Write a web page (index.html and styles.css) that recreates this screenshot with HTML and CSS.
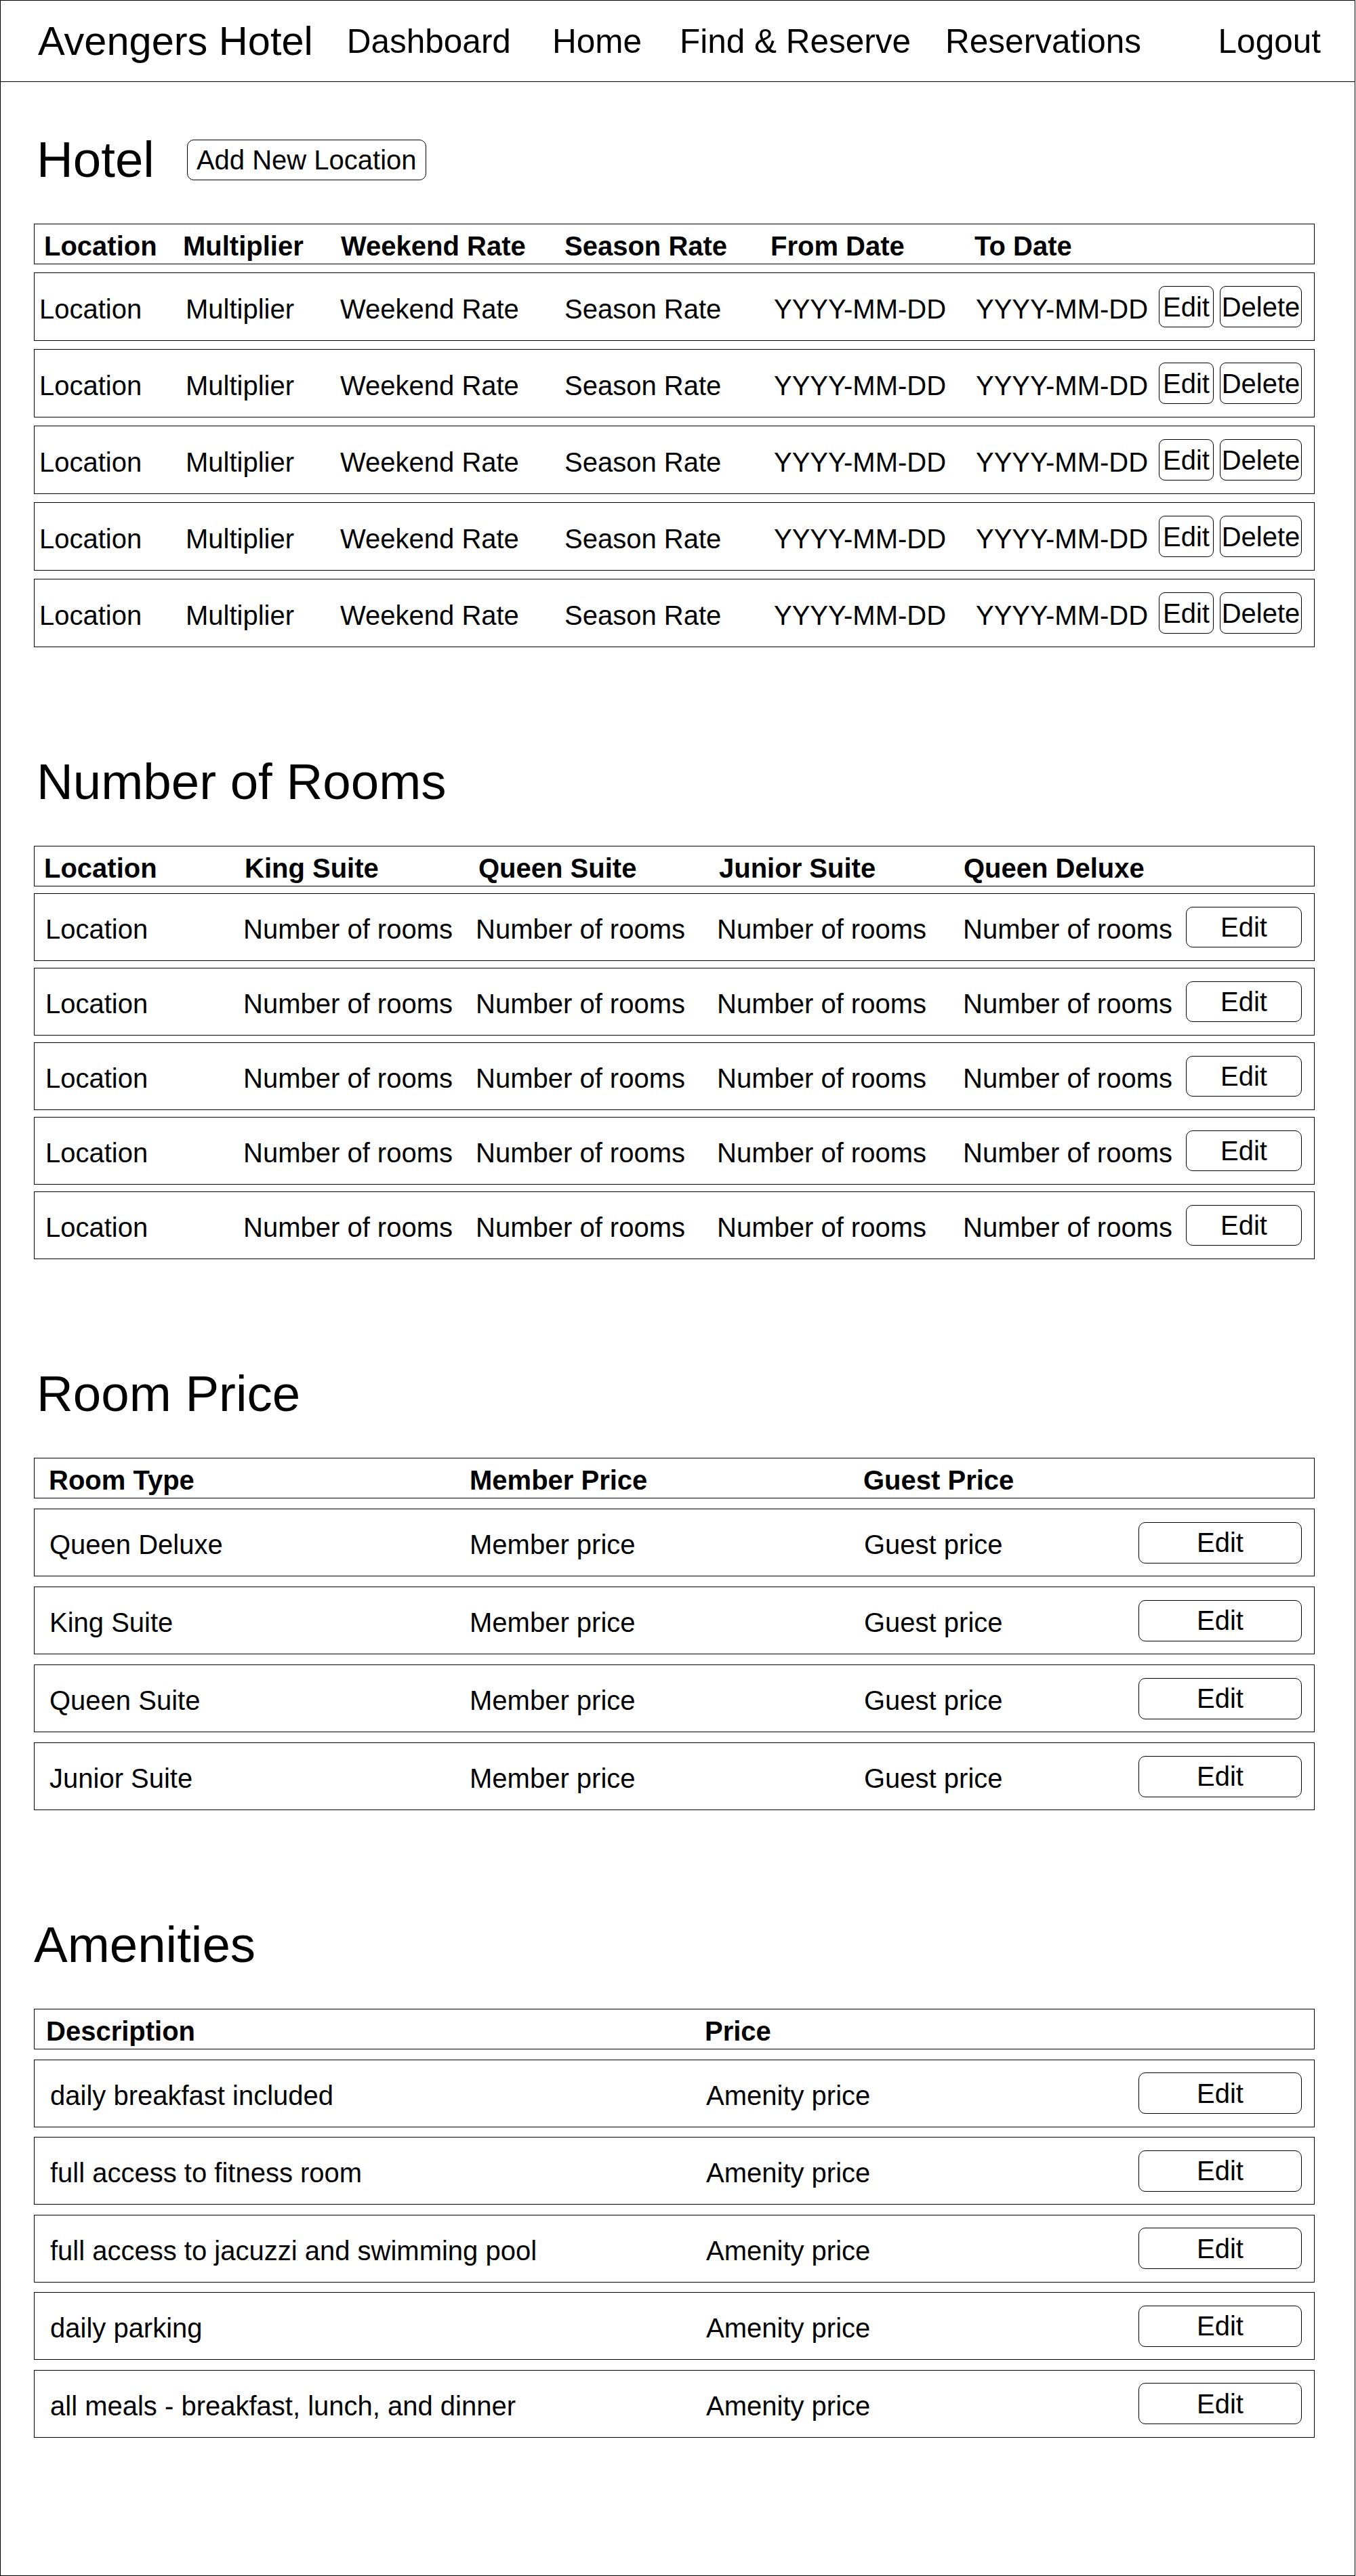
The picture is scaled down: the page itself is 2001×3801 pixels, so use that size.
FILE: index.html
```html
<!DOCTYPE html>
<html lang="en">
<head>
<meta charset="utf-8">
<title>Avengers Hotel - Admin</title>
<link rel="stylesheet" href="styles.css">
</head>
<body>
<div class="page">
  <header class="nav">
    <span class="brand">Avengers Hotel</span>
    <a class="nav-link nav-dashboard">Dashboard</a>
    <a class="nav-link nav-home">Home</a>
    <a class="nav-link nav-find">Find &amp; Reserve</a>
    <a class="nav-link nav-reservations">Reservations</a>
    <a class="nav-link nav-logout">Logout</a>
  </header>

  <main class="content">
    <section class="section">
      <div class="section-head">
        <h1 class="section-title">Hotel</h1>
        <button class="btn btn-add">Add New Location</button>
      </div>
      <div class="table table-hotel">
        <div class="row row-head">
          <span class="cell">Location</span>
          <span class="cell">Multiplier</span>
          <span class="cell">Weekend Rate</span>
          <span class="cell">Season Rate</span>
          <span class="cell">From Date</span>
          <span class="cell">To Date</span>
        </div>
        <div class="row row-data">
          <span class="cell">Location</span><span class="cell">Multiplier</span><span class="cell">Weekend Rate</span><span class="cell">Season Rate</span><span class="cell">YYYY-MM-DD</span><span class="cell">YYYY-MM-DD</span>
          <div class="actions"><button class="btn btn-sm-edit">Edit</button><button class="btn btn-sm-delete">Delete</button></div>
        </div>
        <div class="row row-data">
          <span class="cell">Location</span><span class="cell">Multiplier</span><span class="cell">Weekend Rate</span><span class="cell">Season Rate</span><span class="cell">YYYY-MM-DD</span><span class="cell">YYYY-MM-DD</span>
          <div class="actions"><button class="btn btn-sm-edit">Edit</button><button class="btn btn-sm-delete">Delete</button></div>
        </div>
        <div class="row row-data">
          <span class="cell">Location</span><span class="cell">Multiplier</span><span class="cell">Weekend Rate</span><span class="cell">Season Rate</span><span class="cell">YYYY-MM-DD</span><span class="cell">YYYY-MM-DD</span>
          <div class="actions"><button class="btn btn-sm-edit">Edit</button><button class="btn btn-sm-delete">Delete</button></div>
        </div>
        <div class="row row-data">
          <span class="cell">Location</span><span class="cell">Multiplier</span><span class="cell">Weekend Rate</span><span class="cell">Season Rate</span><span class="cell">YYYY-MM-DD</span><span class="cell">YYYY-MM-DD</span>
          <div class="actions"><button class="btn btn-sm-edit">Edit</button><button class="btn btn-sm-delete">Delete</button></div>
        </div>
        <div class="row row-data">
          <span class="cell">Location</span><span class="cell">Multiplier</span><span class="cell">Weekend Rate</span><span class="cell">Season Rate</span><span class="cell">YYYY-MM-DD</span><span class="cell">YYYY-MM-DD</span>
          <div class="actions"><button class="btn btn-sm-edit">Edit</button><button class="btn btn-sm-delete">Delete</button></div>
        </div>
      </div>
    </section>

    <section class="section">
      <div class="section-head">
        <h1 class="section-title">Number of Rooms</h1>
      </div>
      <div class="table table-rooms">
        <div class="row row-head">
          <span class="cell">Location</span>
          <span class="cell">King Suite</span>
          <span class="cell">Queen Suite</span>
          <span class="cell">Junior Suite</span>
          <span class="cell">Queen Deluxe</span>
        </div>
        <div class="row row-data">
          <span class="cell">Location</span><span class="cell">Number of rooms</span><span class="cell">Number of rooms</span><span class="cell">Number of rooms</span><span class="cell">Number of rooms</span>
          <button class="btn btn-edit-md">Edit</button>
        </div>
        <div class="row row-data">
          <span class="cell">Location</span><span class="cell">Number of rooms</span><span class="cell">Number of rooms</span><span class="cell">Number of rooms</span><span class="cell">Number of rooms</span>
          <button class="btn btn-edit-md">Edit</button>
        </div>
        <div class="row row-data">
          <span class="cell">Location</span><span class="cell">Number of rooms</span><span class="cell">Number of rooms</span><span class="cell">Number of rooms</span><span class="cell">Number of rooms</span>
          <button class="btn btn-edit-md">Edit</button>
        </div>
        <div class="row row-data">
          <span class="cell">Location</span><span class="cell">Number of rooms</span><span class="cell">Number of rooms</span><span class="cell">Number of rooms</span><span class="cell">Number of rooms</span>
          <button class="btn btn-edit-md">Edit</button>
        </div>
        <div class="row row-data">
          <span class="cell">Location</span><span class="cell">Number of rooms</span><span class="cell">Number of rooms</span><span class="cell">Number of rooms</span><span class="cell">Number of rooms</span>
          <button class="btn btn-edit-md">Edit</button>
        </div>
      </div>
    </section>

    <section class="section">
      <div class="section-head">
        <h1 class="section-title">Room Price</h1>
      </div>
      <div class="table table-price">
        <div class="row row-head">
          <span class="cell">Room Type</span>
          <span class="cell">Member Price</span>
          <span class="cell">Guest Price</span>
        </div>
        <div class="row row-data">
          <span class="cell">Queen Deluxe</span><span class="cell">Member price</span><span class="cell">Guest price</span>
          <button class="btn btn-edit-lg">Edit</button>
        </div>
        <div class="row row-data">
          <span class="cell">King Suite</span><span class="cell">Member price</span><span class="cell">Guest price</span>
          <button class="btn btn-edit-lg">Edit</button>
        </div>
        <div class="row row-data">
          <span class="cell">Queen Suite</span><span class="cell">Member price</span><span class="cell">Guest price</span>
          <button class="btn btn-edit-lg">Edit</button>
        </div>
        <div class="row row-data">
          <span class="cell">Junior Suite</span><span class="cell">Member price</span><span class="cell">Guest price</span>
          <button class="btn btn-edit-lg">Edit</button>
        </div>
      </div>
    </section>

    <section class="section">
      <div class="section-head">
        <h1 class="section-title section-title-flush">Amenities</h1>
      </div>
      <div class="table table-amenities">
        <div class="row row-head">
          <span class="cell">Description</span>
          <span class="cell">Price</span>
        </div>
        <div class="row row-data">
          <span class="cell">daily breakfast included</span><span class="cell">Amenity price</span>
          <button class="btn btn-edit-lg">Edit</button>
        </div>
        <div class="row row-data">
          <span class="cell">full access to fitness room</span><span class="cell">Amenity price</span>
          <button class="btn btn-edit-lg">Edit</button>
        </div>
        <div class="row row-data">
          <span class="cell">full access to jacuzzi and swimming pool</span><span class="cell">Amenity price</span>
          <button class="btn btn-edit-lg">Edit</button>
        </div>
        <div class="row row-data">
          <span class="cell">daily parking</span><span class="cell">Amenity price</span>
          <button class="btn btn-edit-lg">Edit</button>
        </div>
        <div class="row row-data">
          <span class="cell">all meals - breakfast, lunch, and dinner</span><span class="cell">Amenity price</span>
          <button class="btn btn-edit-lg">Edit</button>
        </div>
      </div>
    </section>
  </main>
</div>
</body>
</html>
```

FILE: styles.css
```css
html, body {
  margin: 0;
  padding: 0;
  background: #fff;
  overflow: hidden;
}

body {
  font-family: "Liberation Sans", Arial, Helvetica, sans-serif;
  color: #000;
}

.page {
  box-sizing: border-box;
  width: 2000px;
  height: 3801px;
  border: 1px solid #000;
  overflow: hidden;
}

/* ---------- Navigation ---------- */
.nav {
  box-sizing: border-box;
  height: 120px;
  border-bottom: 1px solid #000;
  display: flex;
  align-items: center;
  padding: 0 50px 0 55px;
}

.brand {
  font-size: 59.5px;
  line-height: 1;
  white-space: nowrap;
}

.nav-link {
  font-size: 49.5px;
  line-height: 1;
  color: #000;
  text-decoration: none;
  white-space: nowrap;
}

.nav-dashboard { margin-left: 50px; }
.nav-home { margin-left: 61px; }
.nav-find { margin-left: 56px; }
.nav-reservations { margin-left: 51px; }
.nav-logout { margin-left: auto; }

/* ---------- Content ---------- */
.content {
  padding: 77px 0 0 49px;
}

.section + .section {
  margin-top: 161px;
}

.section-head {
  display: flex;
  align-items: center;
  gap: 48px;
  height: 75px;
  margin-bottom: 57px;
}

.section-title {
  margin: 0;
  padding-left: 4px;
  font-size: 74.5px;
  font-weight: normal;
  line-height: 75px;
  white-space: nowrap;
}

.section-title-flush {
  padding-left: 0;
}

/* ---------- Buttons ---------- */
.btn {
  box-sizing: border-box;
  font-family: inherit;
  font-size: 40px;
  line-height: 1;
  color: #000;
  background: #fff;
  border: 1px solid #000;
  border-radius: 10px;
  padding: 0;
  white-space: nowrap;
  cursor: pointer;
}

.btn-add {
  height: 60px;
  padding: 0 13px;
}

.btn-sm-edit {
  width: 81px;
  height: 61px;
  border-radius: 9px;
}

.btn-sm-delete {
  width: 121px;
  height: 61px;
  border-radius: 9px;
}

.btn-edit-md {
  width: 171px;
  height: 60px;
}

.btn-edit-lg {
  width: 241px;
  height: 61px;
}

/* ---------- Tables ---------- */
.table {
  width: 1890px;
  display: flex;
  flex-direction: column;
}

.row {
  box-sizing: border-box;
  border: 1px solid #000;
  display: grid;
  align-items: center;
  font-size: 40px;
  line-height: 1;
}

.row-head {
  height: 60px;
  font-weight: bold;
}

.row-data {
  height: 100px;
  padding-right: 18px;
}

.cell {
  white-space: nowrap;
  padding-top: 6px;
}

.actions {
  display: flex;
  gap: 9px;
}

/* Hotel */
.table-hotel {
  gap: 12px;
}

.table-hotel .row-head {
  grid-template-columns: 205px 233px 330px 304px 301px 1fr;
  padding-left: 14px;
}

.table-hotel .row-data {
  height: 101px;
  grid-template-columns: 216px 228px 331px 309px 298px 1fr auto;
  padding-left: 7px;
}

/* Number of rooms */
.table-rooms {
  gap: 10px;
}

.table-rooms .row-head {
  grid-template-columns: 296px 345px 355px 361px 1fr;
  padding-left: 14px;
}

.table-rooms .row-data {
  grid-template-columns: 292px 343px 356px 363px 1fr auto;
  padding-left: 16px;
}

/* Room price */
.table-price {
  gap: 15px;
}

.table-price .row-head {
  grid-template-columns: 621px 581px 1fr;
  padding-left: 21px;
}

.table-price .row-data {
  grid-template-columns: 620px 582px 1fr auto;
  padding-left: 22px;
}

/* Amenities */
.table-amenities {
  gap: 14.5px;
}

.table-amenities .row-head {
  grid-template-columns: 972px 1fr;
  padding-left: 17px;
}

.table-amenities .row-data {
  grid-template-columns: 968px 1fr auto;
  padding-left: 23px;
}
```
